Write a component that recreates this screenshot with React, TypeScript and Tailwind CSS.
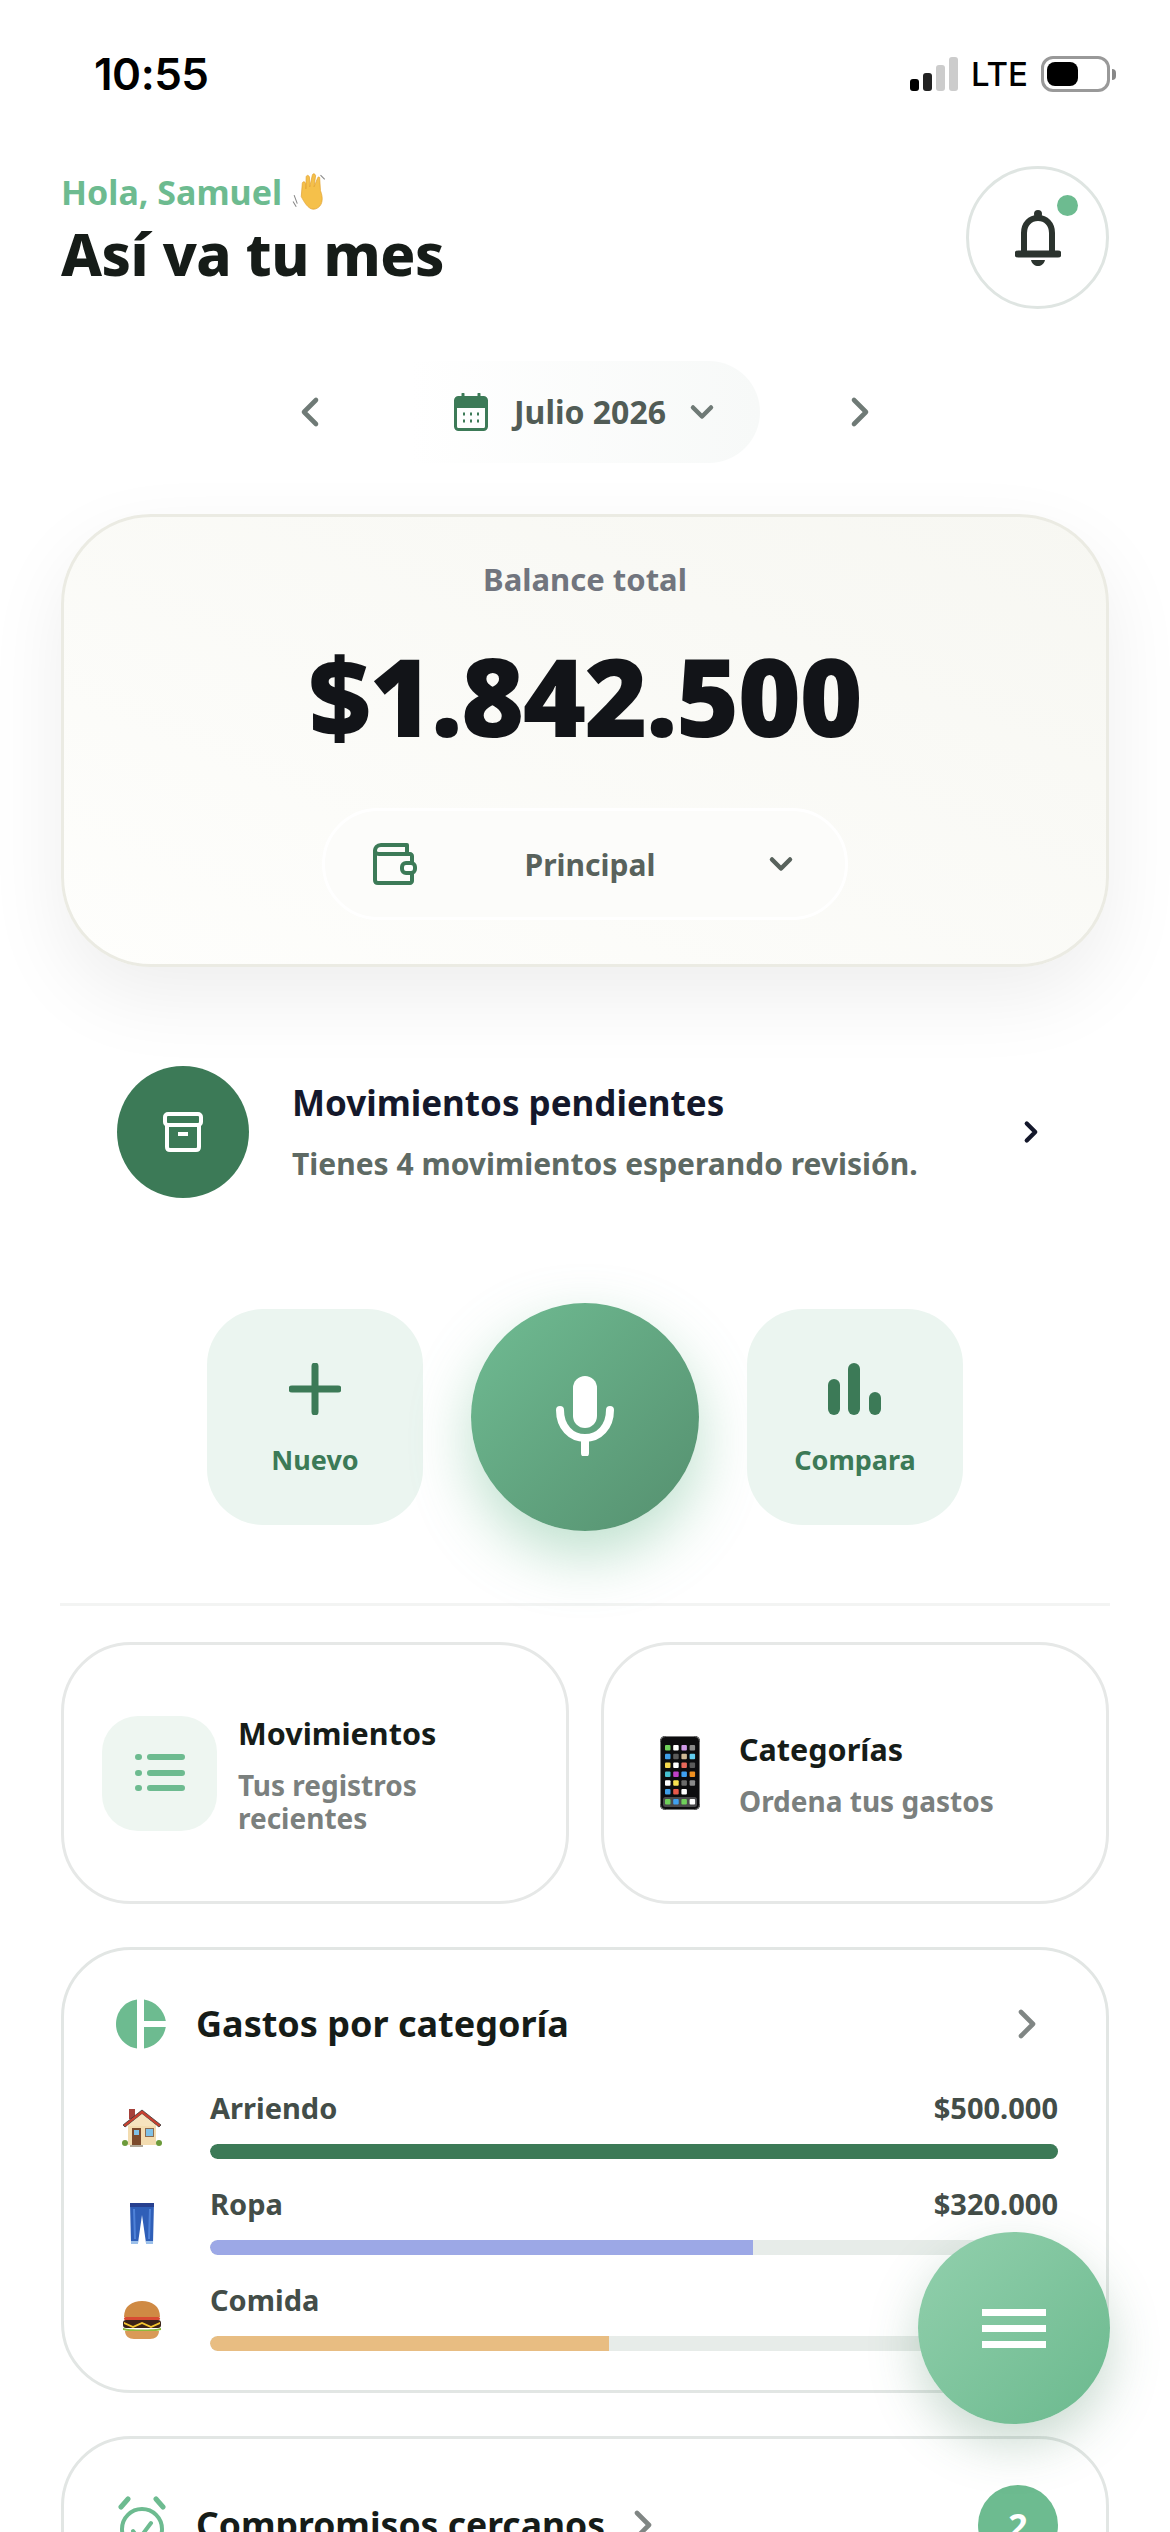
import React from 'react';
import { ChevronLeft, ChevronRight, ChevronDown } from 'lucide-react';

const font = "font-['Noto_Sans','Lato',sans-serif]";

const Bell = () => (
  <svg width="46" height="58" viewBox="0 0 46 58" fill="none">
    <path d="M9 44V24C9 15 15 9 23 9s14 6 14 15v20" stroke="#2b332e" strokeWidth="6" />
    <path d="M3 45h40" stroke="#2b332e" strokeWidth="7" strokeLinecap="round" />
    <circle cx="23" cy="5" r="4" fill="#2b332e" />
    <path d="M16 51h14c-1 4-4 6-7 6s-6-2-7-6z" fill="#2b332e" />
  </svg>
);

const Calendar = () => (
  <svg width="34" height="38" viewBox="0 0 34 38" fill="none">
    <rect x="1.5" y="4.5" width="31" height="32" rx="3" stroke="#3c7a57" strokeWidth="3" />
    <path d="M2 6h30v9H2z" fill="#3c7a57" />
    <path d="M9 1v6M25 1v6" stroke="#3c7a57" strokeWidth="3" strokeLinecap="round" />
    <path d="M9 21h2M16 21h2M23 21h2M9 28h2M16 28h2M23 28h2" stroke="#3c7a57" strokeWidth="3" />
  </svg>
);

const Wallet = () => (
  <svg width="44" height="42" viewBox="0 0 44 42" fill="none" stroke="#3c7a57" strokeWidth="4">
    <path d="M2 8c0-3 2-6 6-6h26v8" strokeLinejoin="round" />
    <path d="M2 8c0 1 1 3 4 3h31c1 0 2 1 2 2v25c0 1-1 2-2 2H5c-2 0-3-1-3-3z" strokeLinejoin="round" />
    <rect x="29" y="20" width="13" height="10" rx="4" fill="#fff" />
  </svg>
);

const Archive = () => (
  <svg width="40" height="40" viewBox="0 0 40 40" fill="none" stroke="#fff" strokeWidth="4">
    <rect x="2" y="2" width="36" height="11" rx="3" />
    <path d="M4 13v22c0 2 1 3 3 3h26c2 0 3-1 3-3V13" />
    <path d="M15 22h10" />
  </svg>
);

const Mic = () => (
  <svg width="58" height="80" viewBox="0 0 58 80" fill="none" className="-mt-[3px]">
    <rect x="17" y="0" width="24" height="52" rx="12" fill="#fff" />
    <path d="M4 34c0 17 11 28 25 28s25-11 25-28" stroke="#fff" strokeWidth="8" strokeLinecap="round" />
    <path d="M29 62v15" stroke="#fff" strokeWidth="8" strokeLinecap="round" />
  </svg>
);

const Plus = () => (
  <svg width="52" height="52" viewBox="0 0 52 52" fill="none" stroke="#3c7a57" strokeWidth="7" strokeLinecap="round">
    <path d="M26 3v46M3 26h46" />
  </svg>
);

const Bars = () => (
  <svg width="54" height="52" viewBox="0 0 54 52" fill="#3c7a57">
    <rect x="0" y="16" width="12" height="36" rx="6" />
    <rect x="20" y="0" width="12" height="52" rx="6" />
    <rect x="41" y="29" width="12" height="23" rx="6" />
  </svg>
);

const ListIcon = () => (
  <svg width="50" height="40" viewBox="0 0 50 40" fill="none" stroke="#6dbb90" strokeWidth="6" strokeLinecap="round">
    <path d="M3 4h1M3 20h1M3 35h1M15 4h32M15 20h32M15 35h32" />
  </svg>
);

const Phone = () => {
  const colors = ['#6fd05a', '#fff', '#cf9ae8', '#8a8a8a', '#3f9fe8', '#5a5a5a', '#cdb894', '#62cdf0', '#f4d94e', '#fff', '#e8685a', '#5a5a5a', '#45c0d0', '#c040c8', '#3fa0f0', '#f09020', '#fff', '#f6e050', '#6a6a6a', '#8a8a8a', '#3f9fe8', '#e8584a', '#fff'];
  return (
    <svg width="40" height="74" viewBox="0 0 40 74">
      <rect x="0" y="0" width="40" height="74" rx="5" fill="#0c0c0e" />
      <rect x="0.5" y="0.5" width="39" height="73" rx="5" fill="none" stroke="#777" strokeWidth="1" />
      {colors.map((c, i) => (
        <rect key={i} x={5 + (i % 4) * 8.2} y={9 + Math.floor(i / 4) * 8.8} width="5.5" height="5.5" rx="1" fill={c} />
      ))}
      <rect x="3" y="61" width="34" height="10" rx="2.5" fill="#4a4a4c" />
      {['#6fd05a', '#3fa0f0', '#6fd05a', '#fff'].map((c, i) => (
        <rect key={i} x={5 + i * 8.2} y="63" width="5.5" height="5.5" rx="1" fill={c} />
      ))}
    </svg>
  );
};

const Pie = () => (
  <svg width="50" height="50" viewBox="0 0 50 50" fill="#6dbb90">
    <path d="M21 0.5V49.5C9 48 0 37.5 0 25S9 2 21 0.5z" />
    <path d="M28 0.5C39 2 48 11 49.8 22H28z" />
    <path d="M28 28H49.8C48 39 39 48 28 49.5z" />
  </svg>
);

const House = () => (
  <svg width="40" height="40" viewBox="0 0 40 40">
    <rect x="7" y="1" width="6" height="10" fill="#a5413a" />
    <rect x="6" y="14" width="28" height="23" fill="#f3dcb0" />
    <path d="M1 17L20 2l19 15-2 2L20 6 3 19z" fill="#c8402f" stroke="#3a3a3a" strokeWidth="0.8" />
    <path d="M5 18L20 6l15 12z" fill="#f6e3be" />
    <rect x="10" y="20" width="9" height="17" fill="#7c4a2c" />
    <rect x="12" y="22" width="5" height="5" fill="#7fc0e6" />
    <rect x="23" y="20" width="9" height="9" fill="#8c6b50" />
    <rect x="24" y="21" width="7" height="7" fill="#7fc0e6" />
    <circle cx="3" cy="35" r="3" fill="#6c9a3a" />
    <circle cx="37" cy="35" r="3" fill="#6c9a3a" />
    <rect x="8" y="37" width="13" height="2" fill="#b0a898" />
  </svg>
);

const Jeans = () => (
  <svg width="24" height="42" viewBox="0 0 24 42">
    <path d="M0 0h24l-1 40h-7L12 12 8 40H1z" fill="#2f5fb8" />
    <path d="M0 0h24v4H0z" fill="#27408f" />
    <path d="M1 38h7v3H1zM16 38h7v3h-7z" fill="#9cc0ea" />
    <path d="M4 6l1 30M20 6l-1 30" stroke="#4f82d8" strokeWidth="2" fill="none" />
  </svg>
);

const Burger = () => (
  <svg width="40" height="40" viewBox="0 0 40 40">
    <path d="M2 17C2 6 10 1 20 1s18 5 18 16z" fill="#cf8a44" />
    <rect x="2" y="17" width="36" height="3" rx="1.5" fill="#d84a32" />
    <rect x="1" y="20" width="38" height="8" rx="3" fill="#3a2218" />
    <path d="M2 22l9 4 9-4 9 4 9-4v2l-9 4-9-4-9 4-9-4z" fill="#f4c430" />
    <path d="M1 28c6 2 32 2 38 0v2c-6 2-32 2-38 0z" fill="#8dbb3c" />
    <path d="M3 31h34c0 5-4 8-9 8H12c-5 0-9-3-9-8z" fill="#d99a58" />
  </svg>
);

const Wave = () => (
  <svg width="38" height="38" viewBox="0 0 36 36">
    <g transform="rotate(-14 18 18)">
      <path d="M8 20L12 8c1-2 3-1 3 1l-1 5 3-11c1-2 3-1 3 1l-2 9 5-10c1-2 3-1 3 1l-4 10 5-7c1-2 3-1 2 1L27 19c1 7-1 13-6 15-6 2-10-1-13-14z" fill="#f5c04a" stroke="#e0a030" strokeWidth="0.6" />
    </g>
    <path d="M2 21l3 8M1 27l3 5M27 2l4 4" stroke="#888" strokeWidth="1" />
  </svg>
);

const Alarm = () => (
  <svg width="48" height="60" viewBox="0 0 48 60" fill="none" stroke="#6dbb90" strokeWidth="4" strokeLinecap="round">
    <circle cx="24" cy="34" r="20" />
    <path d="M15 36l6 8 12-16" />
    <path d="M3 12l7-8M45 12l-7-8" strokeWidth="5" />
  </svg>
);

const rows = [
  { name: 'Arriendo', amount: '$500.000', pct: 100, color: 'bg-[#3c7a57]', icon: <House /> },
  { name: 'Ropa', amount: '$320.000', pct: 64, color: 'bg-[#9ca8e6]', icon: <Jeans /> },
  { name: 'Comida', amount: '$235.000', pct: 47, color: 'bg-[#e8bd82]', icon: <Burger /> },
];

export default function App() {
  return (
    <div className={`relative w-[1170px] h-[2532px] overflow-hidden bg-white ${font}`}>
      {/* status bar */}
      <div className="flex items-center justify-between h-[146px] pl-[94px] pr-[54px] pt-[2px] text-black">
        <span className="font-['Inter',sans-serif] text-[44px] font-semibold tracking-[-0.5px]">10:55</span>
        <div className="flex items-center gap-[13px]">
          <div className="flex items-end gap-[4px] h-[34px]">
            <div className="w-[9px] h-[12px] rounded-[3px] bg-black" />
            <div className="w-[9px] h-[18px] rounded-[3px] bg-[#222]" />
            <div className="w-[9px] h-[26px] rounded-[3px] bg-[#ccc]" />
            <div className="w-[9px] h-[34px] rounded-[3px] bg-[#ccc]" />
          </div>
          <span className="font-['Inter',sans-serif] text-[33px] font-medium leading-none">LTE</span>
          <div className="flex items-center gap-[2px]">
            <div className="w-[69px] h-[36px] rounded-[12px] border-[3px] border-[#999] p-[3px]">
              <div className="w-[31px] h-full rounded-[8px] bg-black" />
            </div>
            <div className="w-[4px] h-[11px] rounded-r-full bg-[#888]" />
          </div>
        </div>
      </div>

      {/* header */}
      <div className="flex items-start justify-between px-[61px] mt-[20px]">
        <div className="pt-[6px]">
          <div className="flex items-center gap-[10px] h-[40px] text-[34px] font-bold text-[#6dbb90]">
            Hola, Samuel <Wave />
          </div>
          <h1 className="mt-[7px] text-[58px] leading-[70px] font-extrabold tracking-[-0.5px] text-[#161c18]">Así va tu mes</h1>
        </div>
        <div className="relative flex items-center justify-center w-[143px] h-[143px] rounded-full border-[3px] border-[#dfe5e2]">
          <Bell />
          <div className="absolute right-[28px] top-[26px] w-[21px] h-[21px] rounded-full bg-[#6dbb90]" />
        </div>
      </div>

      {/* month selector */}
      <div className="flex items-center justify-center mt-[52px] h-[102px]">
        <ChevronLeft className="w-[48px] h-[48px] text-[#6f7a76] mr-[76px]" strokeWidth={2.3} />
        <div className="flex items-center w-[350px] h-[102px] pl-[44px] rounded-r-full bg-linear-to-r from-white to-[#f7f9f8]">
          <Calendar />
          <span className="ml-[26px] text-[32px] font-bold text-[#515c56]">Julio 2026</span>
          <ChevronDown className="ml-[18px] w-[36px] h-[36px] text-[#6f7a76]" strokeWidth={3} />
        </div>
        <ChevronRight className="w-[48px] h-[48px] text-[#6f7a76] ml-[76px]" strokeWidth={2.3} />
      </div>

      {/* balance */}
      <div className="mx-[61px] mt-[51px] h-[453px] rounded-[90px] border-[3px] border-[#ebebe3] bg-linear-to-tr from-[#fefefc] to-[#f7f7f2] shadow-[0_30px_80px_rgba(0,0,0,0.07)] flex flex-col items-center">
        <div className="mt-[42px] text-[31px] leading-[40px] font-bold text-[#71757e]">Balance total</div>
        <div className="mt-[32px] text-[108px] leading-[130px] font-black tracking-[-1.5px] text-[#121418]">$1.842.500</div>
        <div className="mt-[47px] flex items-center justify-between w-[526px] h-[112px] pl-[48px] pr-[46px] rounded-full border-[3px] border-white bg-[#fcfcfa]">
          <Wallet />
          <span className="text-[30px] font-bold text-[#58625c]">Principal</span>
          <ChevronDown className="w-[36px] h-[36px] text-[#58625c]" strokeWidth={3} />
        </div>
      </div>

      {/* pending */}
      <div className="flex items-center mx-[117px] mt-[99px] h-[132px]">
        <div className="flex items-center justify-center w-[132px] h-[132px] rounded-full bg-[#3c7a57]">
          <Archive />
        </div>
        <div className="flex-1 ml-[43px]">
          <div className="text-[35px] leading-[44px] font-bold text-[#14182b]">Movimientos pendientes</div>
          <div className="mt-[20px] text-[30px] leading-[38px] font-bold text-[#5e6a64]">Tienes 4 movimientos esperando revisión.</div>
        </div>
        <ChevronRight className="w-[34px] h-[34px] text-[#14182b] mr-[5px]" strokeWidth={3} />
      </div>

      {/* actions */}
      <div className="flex items-center justify-center gap-[48px] mt-[105px] h-[228px]">
        <div className="flex flex-col items-center justify-center w-[216px] h-[216px] pt-[6px] rounded-[56px] bg-[#ebf5f0]">
          <Plus />
          <span className="mt-[27px] text-[27px] leading-[36px] font-bold text-[#3c7a57]">Nuevo</span>
        </div>
        <div className="flex items-center justify-center w-[228px] h-[228px] rounded-full bg-linear-to-br from-[#70bc93] to-[#55906f] shadow-[0_24px_60px_rgba(109,187,144,0.45)]">
          <Mic />
        </div>
        <div className="flex flex-col items-center justify-center w-[216px] h-[216px] pt-[6px] rounded-[56px] bg-[#ebf5f0]">
          <Bars />
          <span className="mt-[27px] text-[27px] leading-[36px] font-bold text-[#3c7a57]">Compara</span>
        </div>
      </div>

      <div className="mx-[60px] mt-[72px] h-[3px] bg-[#f3f4f3]" />

      {/* shortcuts */}
      <div className="grid grid-cols-2 gap-[32px] mx-[61px] mt-[36px]">
        <div className="flex items-center h-[262px] pl-[38px] rounded-[70px] border-[3px] border-[#e6e8e7]">
          <div className="flex items-center justify-center shrink-0 w-[115px] h-[115px] rounded-[36px] bg-[#eef6f1]">
            <ListIcon />
          </div>
          <div className="ml-[21px] pt-[2px]">
            <div className="text-[30.5px] leading-[40px] font-bold text-[#161c18]">Movimientos</div>
            <div className="mt-[16px] text-[28px] leading-[33px] font-bold text-[#7b807e]">Tus registros<br />recientes</div>
          </div>
        </div>
        <div className="flex items-center h-[262px] pl-[56px] rounded-[70px] border-[3px] border-[#e6e8e7]">
          <Phone />
          <div className="ml-[39px]">
            <div className="text-[30.5px] leading-[40px] font-bold text-[#161c18]">Categorías</div>
            <div className="mt-[16px] text-[28px] leading-[33px] font-bold text-[#7b807e]">Ordena tus gastos</div>
          </div>
        </div>
      </div>

      {/* gastos */}
      <div className="mx-[61px] mt-[43px] h-[446px] rounded-[70px] border-[3px] border-[#e2e6e4] pl-[52px] pr-[48px] pt-[49px]">
        <div className="flex items-center h-[50px]">
          <Pie />
          <span className="ml-[30px] flex-1 text-[36px] font-bold text-[#161c18]">Gastos por categoría</span>
          <ChevronRight className="w-[48px] h-[48px] text-[#808684] mr-[7px]" strokeWidth={2.3} />
        </div>
        <div className="mt-[34px] flex flex-col gap-[15px]">
          {rows.map((r) => (
            <div key={r.name} className="flex items-center h-[81px]">
              <div className="flex items-center justify-center w-[54px] shrink-0 -ml-[1px] mt-[9px]">{r.icon}</div>
              <div className="ml-[41px] flex-1">
                <div className="flex justify-between h-[55px] text-[29px] leading-[38px] font-bold text-[#434d48]">
                  <span>{r.name}</span>
                  <span>{r.amount}</span>
                </div>
                <div className="h-[15px] rounded-full bg-[#e7ece9] overflow-hidden">
                  <div className={`h-full rounded-l-full ${r.color}`} style={{ width: `${r.pct}%` }} />
                </div>
              </div>
            </div>
          ))}
        </div>
      </div>

      {/* compromisos */}
      <div className="mx-[61px] mt-[43px] h-[300px] rounded-[70px] border-[3px] border-[#e2e6e4] pl-[54px] pr-[48px] pt-[46px]">
        <div className="flex items-center h-[80px]">
          <Alarm />
          <span className="ml-[30px] text-[35.5px] font-bold text-[#161c18]">Compromisos cercanos</span>
          <ChevronRight className="ml-[14px] w-[48px] h-[48px] text-[#808684]" strokeWidth={2.3} />
          <div className="ml-auto flex items-center justify-center w-[80px] h-[80px] rounded-full bg-[#6dbb90] text-[34px] font-bold text-white">2</div>
        </div>
      </div>

      {/* menu button */}
      <div className="absolute left-[918px] top-[2232px] flex flex-col items-center justify-center gap-[9px] w-[192px] h-[192px] rounded-full bg-linear-to-br from-[#92d0ad] to-[#6bb98e] shadow-[0_20px_50px_rgba(60,122,87,0.28)]">
        <div className="w-[64px] h-[7px] bg-white" />
        <div className="w-[64px] h-[7px] bg-white" />
        <div className="w-[64px] h-[7px] bg-white" />
      </div>
    </div>
  );
}
